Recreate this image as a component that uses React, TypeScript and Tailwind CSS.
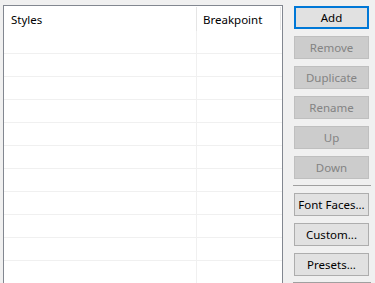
import React from "react";

const font = { fontFamily: '"Noto Sans", "Open Sans", sans-serif' };

function Btn({ label, disabled, primary }: { label: string; disabled?: boolean; primary?: boolean }) {
  const cls = primary
    ? "border-2 border-[#0078d7] bg-[#e1e1e1] text-black"
    : disabled
    ? "border border-[#bfbfbf] bg-[#cccccc] text-[#838383]"
    : "border border-[#adadad] bg-[#e1e1e1] text-black";
  return (
    <div className={`ml-[1px] flex h-[23px] w-[75px] items-center justify-center pt-[1px] text-[11.5px] leading-none ${cls}`}>
      {label}
    </div>
  );
}

export default function App() {
  const rows = Array.from({ length: 12 });
  return (
    <div className="flex h-[283px] w-[375px] overflow-hidden bg-[#f0f0f0]" style={font}>
      <div className="ml-[3px] mt-[5px] h-[320px] w-[280px] shrink-0 border border-[#828790] bg-white">
        <div className="flex h-[25px] text-[11.5px] text-black">
          <div className="flex w-[193px] items-start">
            <div className="mt-[1px] flex h-[24px] w-[192px] items-center pl-[7px] pt-[1px]">Styles</div>
            <div className="mt-[1px] h-[24px] w-px bg-[#e5e5e5]" />
          </div>
          <div className="flex w-[84px] items-start">
            <div className="mt-[1px] flex h-[24px] w-[83px] items-center pl-[6px] pt-[1px]">Breakpoint</div>
            <div className="mt-[1px] h-[23px] w-px bg-[#e5e5e5]" />
          </div>
        </div>
        {rows.map((_, i) => (
          <div key={i} className="flex h-[23px] border-b border-[#f0f0f0]">
            <div className="w-[193px] border-r border-[#f0f0f0]" />
            <div className="flex-1" />
          </div>
        ))}
      </div>
      <div className="ml-[10px] flex w-[78px] shrink-0 flex-col pt-[6px]">
        <div className="flex flex-col gap-[7px]">
          <Btn label="Add" primary />
          <Btn label="Remove" disabled />
          <Btn label="Duplicate" disabled />
          <Btn label="Rename" disabled />
          <Btn label="Up" disabled />
          <Btn label="Down" disabled />
        </div>
        <div className="mb-[7px] mt-[6px] h-px w-[78px] bg-[#a0a0a0]" />
        <div className="flex flex-col gap-[7px]">
          <Btn label="Font Faces..." />
          <Btn label="Custom..." />
          <Btn label="Presets..." />
        </div>
        <div className="mt-[6px] h-px w-[78px] bg-[#a0a0a0]" />
      </div>
    </div>
  );
}
